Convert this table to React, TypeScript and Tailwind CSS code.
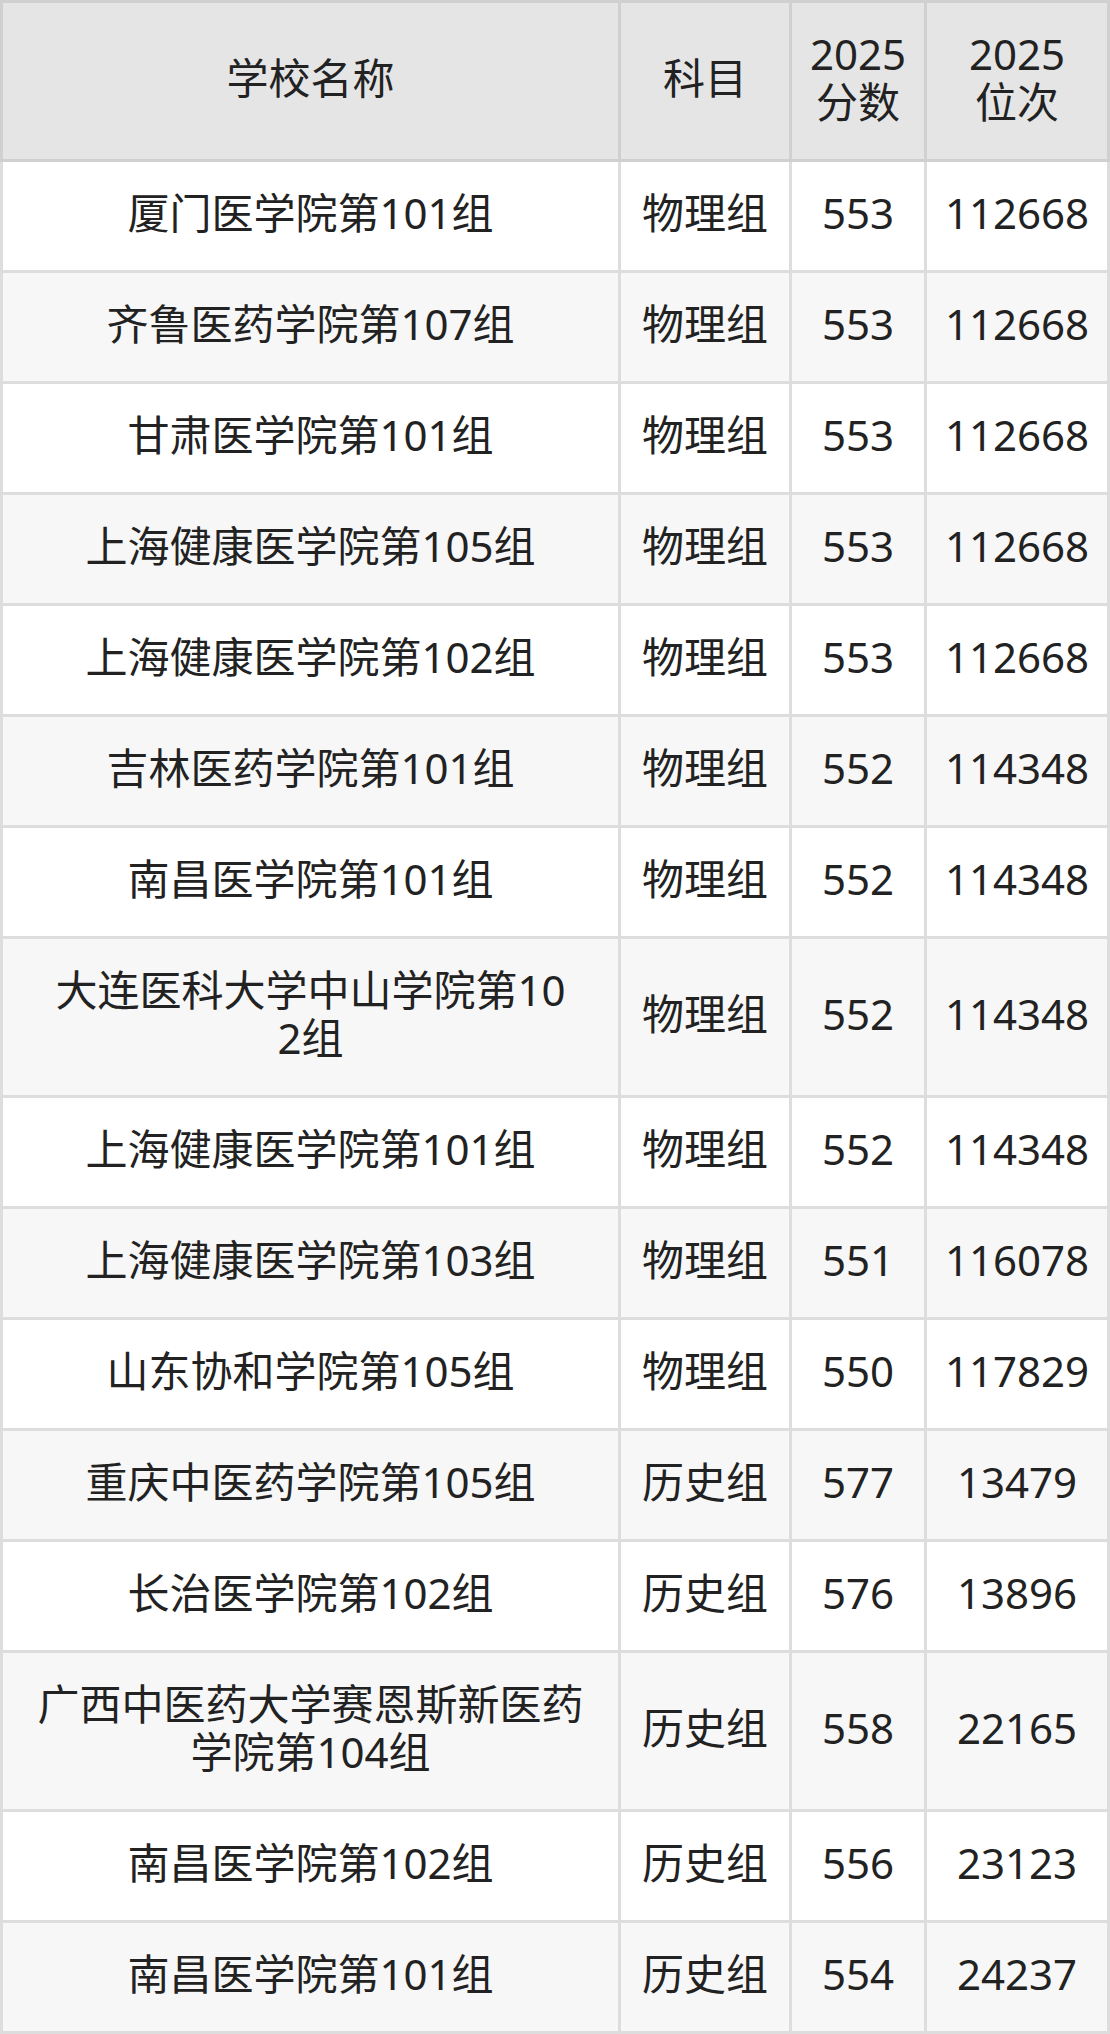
import React from "react";

type Row = { name: string[]; subj: string; score: string; rank: string };

const rows: Row[] = [
  { name: ["厦门医学院第101组"], subj: "物理组", score: "553", rank: "112668" },
  { name: ["齐鲁医药学院第107组"], subj: "物理组", score: "553", rank: "112668" },
  { name: ["甘肃医学院第101组"], subj: "物理组", score: "553", rank: "112668" },
  { name: ["上海健康医学院第105组"], subj: "物理组", score: "553", rank: "112668" },
  { name: ["上海健康医学院第102组"], subj: "物理组", score: "553", rank: "112668" },
  { name: ["吉林医药学院第101组"], subj: "物理组", score: "552", rank: "114348" },
  { name: ["南昌医学院第101组"], subj: "物理组", score: "552", rank: "114348" },
  { name: ["大连医科大学中山学院第10", "2组"], subj: "物理组", score: "552", rank: "114348" },
  { name: ["上海健康医学院第101组"], subj: "物理组", score: "552", rank: "114348" },
  { name: ["上海健康医学院第103组"], subj: "物理组", score: "551", rank: "116078" },
  { name: ["山东协和学院第105组"], subj: "物理组", score: "550", rank: "117829" },
  { name: ["重庆中医药学院第105组"], subj: "历史组", score: "577", rank: "13479" },
  { name: ["长治医学院第102组"], subj: "历史组", score: "576", rank: "13896" },
  { name: ["广西中医药大学赛恩斯新医药", "学院第104组"], subj: "历史组", score: "558", rank: "22165" },
  { name: ["南昌医学院第102组"], subj: "历史组", score: "556", rank: "23123" },
  { name: ["南昌医学院第101组"], subj: "历史组", score: "554", rank: "24237" },
];

function Lines({ lines }: { lines: string[] }) {
  return (
    <div className="flex flex-col items-center">
      {lines.map((l, i) => (
        <span key={i} className="block whitespace-nowrap h-[48px]">
          {l}
        </span>
      ))}
    </div>
  );
}

const cell =
  "shrink-0 border-r-[3px] pt-[27px] pb-[33px] flex items-center justify-center text-center";

export default function App() {
  return (
    <div
      className="w-[1110px] bg-white text-[#222222] text-[42px] leading-[48px]"
      style={{ fontFamily: '"Noto Sans", "Noto Sans CJK SC", sans-serif' }}
    >
      {/* Header */}
      <div className="flex border-l-[3px] border-t-[3px] border-b-[3px] border-[#d0d0d0] bg-[#e5e5e5]">
        <div className={`w-[618px] border-[#d0d0d0] ${cell}`}>
          <Lines lines={["学校名称"]} />
        </div>
        <div className={`w-[171px] border-[#d0d0d0] ${cell}`}>
          <Lines lines={["科目"]} />
        </div>
        <div className={`w-[135px] border-[#d0d0d0] ${cell}`}>
          <Lines lines={["2025", "分数"]} />
        </div>
        <div className={`w-[183px] border-[#d0d0d0] ${cell}`}>
          <Lines lines={["2025", "位次"]} />
        </div>
      </div>
      {rows.map((r, i) => (
        <div
          key={i}
          className={`flex border-l-[3px] border-b-[3px] border-[#dddddd] ${
            i % 2 === 1 ? "bg-[#f7f7f7]" : "bg-white"
          }`}
        >
          <div className={`w-[618px] border-[#dddddd] ${cell}`}>
            <Lines lines={r.name} />
          </div>
          <div className={`w-[171px] border-[#dddddd] ${cell}`}>
            <Lines lines={[r.subj]} />
          </div>
          <div className={`w-[135px] border-[#dddddd] ${cell}`}>
            <Lines lines={[r.score]} />
          </div>
          <div className={`w-[183px] border-[#dddddd] ${cell}`}>
            <Lines lines={[r.rank]} />
          </div>
        </div>
      ))}
    </div>
  );
}
